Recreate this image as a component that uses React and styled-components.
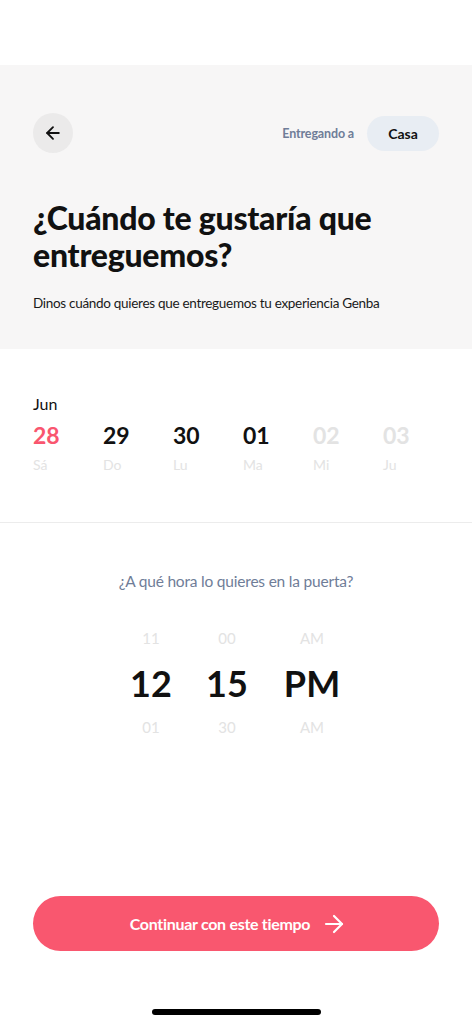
import React from "react";
import styled, { createGlobalStyle } from "styled-components";

const Global = createGlobalStyle`
  html, body { margin: 0; padding: 0; background: #ffffff; }
  body { font-family: Lato, "Noto Sans", sans-serif; -webkit-font-smoothing: antialiased; }
  * { box-sizing: border-box; }
`;

const Screen = styled.div`
  width: 472px;
  height: 1024px;
  display: flex;
  flex-direction: column;
  background: #fff;
  overflow: hidden;
`;

const StatusSpace = styled.div`
  height: 65px;
  flex-shrink: 0;
`;

const Header = styled.header`
  background: #f7f6f6;
  padding: 48px 33px 0;
  height: 284px;
  flex-shrink: 0;
`;

const TopBar = styled.div`
  display: flex;
  align-items: center;
  justify-content: space-between;
`;

const BackButton = styled.button`
  width: 40px;
  height: 40px;
  border-radius: 50%;
  border: none;
  background: #ebeaea;
  display: flex;
  align-items: center;
  justify-content: center;
  padding: 0;
  cursor: pointer;
`;

const Delivery = styled.div`
  display: flex;
  align-items: center;
  gap: 13px;
`;

const DeliveryLabel = styled.span`
  font-size: 12.5px;
  font-weight: 700;
  letter-spacing: -0.15px;
  color: #6f7d98;
`;

const Pill = styled.span`
  height: 35px;
  width: 72px;
  border-radius: 18px;
  background: #e8edf3;
  display: flex;
  align-items: center;
  justify-content: center;
  font-size: 14px;
  font-weight: 700;
  color: #111;
`;

const Title = styled.h1`
  margin: 46px 0 0;
  font-size: 32px;
  line-height: 37px;
  font-weight: 900;
  color: #111;
  letter-spacing: -0.25px;
`;

const Subtitle = styled.p`
  margin: 21px 0 0;
  font-size: 13.5px;
  line-height: 18px;
  letter-spacing: -0.3px;
  color: #1a1a1a;
`;

const DateSection = styled.section`
  padding: 45px 33px 0;
  height: 174px;
  border-bottom: 1px solid #ececec;
  flex-shrink: 0;
`;

const Month = styled.div`
  font-size: 16px;
  line-height: 20px;
  color: #111;
`;

const DateRow = styled.div`
  display: grid;
  grid-template-columns: repeat(6, 70px);
  margin-top: 7px;
`;

const DateCell = styled.div`
  display: flex;
  flex-direction: column;
`;

const DayNum = styled.span`
  font-size: 23px;
  line-height: 28px;
  font-weight: 700;
  color: ${(p) => (p.$state === "active" ? "#f9566f" : p.$state === "off" ? "#e3e3e3" : "#111")};
`;

const DayName = styled.span`
  margin-top: 7px;
  font-size: 14px;
  line-height: 17px;
  color: #e3e3e3;
`;

const TimeSection = styled.section`
  flex: 1;
  display: flex;
  flex-direction: column;
  align-items: center;
  padding-top: 48px;
`;

const Question = styled.div`
  font-size: 15.5px;
  line-height: 20px;
  letter-spacing: -0.2px;
  color: #6f7d98;
`;

const Picker = styled.div`
  margin-top: 38px;
  display: grid;
  grid-template-columns: 76px 76px 94px;
  margin-left: 0;
`;

const PickerCol = styled.div`
  display: flex;
  flex-direction: column;
  align-items: center;
`;

const FadedValue = styled.span`
  font-size: 15px;
  line-height: 18px;
  color: #e3e3e3;
`;

const MainValue = styled.span`
  font-size: 36px;
  line-height: 44px;
  font-weight: 700;
  color: #111;
  margin: 14px 0 13px;
`;

const Footer = styled.div`
  padding: 0 33px;
  flex-shrink: 0;
`;

const CTA = styled.button`
  width: 100%;
  height: 55px;
  border: none;
  border-radius: 28px;
  background: #f9576f;
  color: #fff;
  font-family: Lato, sans-serif;
  font-size: 16px;
  letter-spacing: -0.3px;
  font-weight: 700;
  display: flex;
  align-items: center;
  justify-content: center;
  gap: 12px;
  padding: 0 0 0 4px;
  cursor: pointer;
`;

const HomeBar = styled.div`
  height: 73px;
  display: flex;
  align-items: flex-end;
  justify-content: center;
  padding-bottom: 9px;
  flex-shrink: 0;
`;

const Indicator = styled.div`
  width: 169px;
  height: 6px;
  border-radius: 3px;
  background: #000;
`;

const Arrow = ({ color = "#111", size = 18, sw = 2 }) => (
  <svg width={size} height={size} viewBox="0 0 24 24" fill="none" stroke={color} strokeWidth={sw} strokeLinecap="round" strokeLinejoin="round">
    <path d="M19 12H5" />
    <path d="M12 19l-7-7 7-7" />
  </svg>
);

const ArrowRight = ({ color = "#fff", size = 24, sw = 2.2 }) => (
  <svg width={size} height={size} viewBox="0 0 24 24" fill="none" stroke={color} strokeWidth={sw} strokeLinecap="round" strokeLinejoin="round">
    <path d="M4 12h16" />
    <path d="M12 4l8 8-8 8" />
  </svg>
);

const dates = [
  { n: "28", d: "Sá", s: "active" },
  { n: "29", d: "Do", s: "on" },
  { n: "30", d: "Lu", s: "on" },
  { n: "01", d: "Ma", s: "on" },
  { n: "02", d: "Mi", s: "off" },
  { n: "03", d: "Ju", s: "off" },
];

const picker = [
  ["11", "12", "01"],
  ["00", "15", "30"],
  ["AM", "PM", "AM"],
];

export default function App() {
  return (
    <Screen>
      <Global />
      <StatusSpace />
      <Header>
        <TopBar>
          <BackButton aria-label="Volver">
            <Arrow size={20} sw={2.2} />
          </BackButton>
          <Delivery>
            <DeliveryLabel>Entregando a</DeliveryLabel>
            <Pill>Casa</Pill>
          </Delivery>
        </TopBar>
        <Title>¿Cuándo te gustaría que entreguemos?</Title>
        <Subtitle>Dinos cuándo quieres que entreguemos tu experiencia Genba</Subtitle>
      </Header>
      <DateSection>
        <Month>Jun</Month>
        <DateRow>
          {dates.map((x) => (
            <DateCell key={x.n}>
              <DayNum $state={x.s}>{x.n}</DayNum>
              <DayName>{x.d}</DayName>
            </DateCell>
          ))}
        </DateRow>
      </DateSection>
      <TimeSection>
        <Question>¿A qué hora lo quieres en la puerta?</Question>
        <Picker>
          {picker.map((col, i) => (
            <PickerCol key={i}>
              <FadedValue>{col[0]}</FadedValue>
              <MainValue>{col[1]}</MainValue>
              <FadedValue>{col[2]}</FadedValue>
            </PickerCol>
          ))}
        </Picker>
      </TimeSection>
      <Footer>
        <CTA>
          Continuar con este tiempo
          <ArrowRight />
        </CTA>
      </Footer>
      <HomeBar>
        <Indicator />
      </HomeBar>
    </Screen>
  );
}
